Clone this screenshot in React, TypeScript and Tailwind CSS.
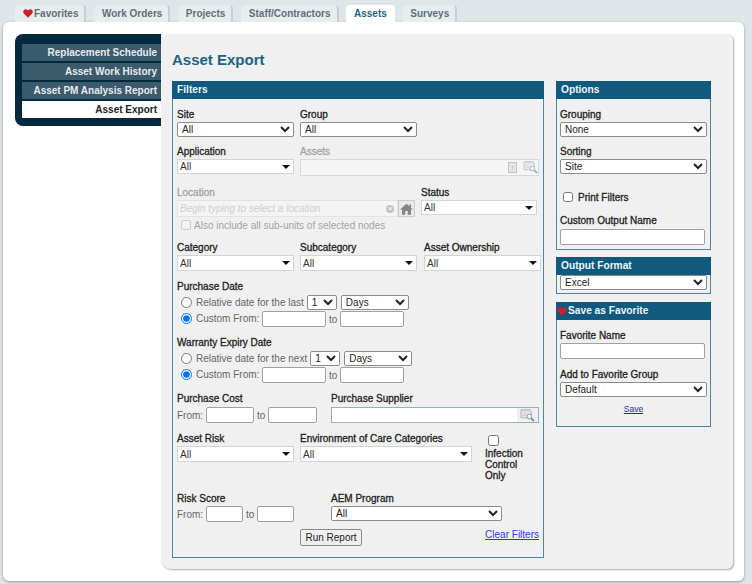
import type { ReactNode } from 'react';

const TABS = ['Work Orders', 'Projects', 'Staff/Contractors', 'Assets', 'Surveys'];
const SIDE_ITEMS = ['Replacement Schedule', 'Asset Work History', 'Asset PM Analysis Report'];

function Heart({ className }: { className: string }) {
  return (
    <svg viewBox="0 0 24 22" className={className}>
      <path
        d="M12 21.500 2.200 11.600C-.6 8.700-.3 4.300 2.500 2 5.200-.2 9.300.2 12 3.600 14.700.2 18.800-.2 21.500 2c2.800 2.300 3.100 6.700.3 9.600z"
        fill="#c8232c"
      />
    </svg>
  );
}

function FindIcon() {
  return (
    <svg viewBox="0 0 16 14" className="h-[13px] w-[15px]">
      <path d="M1 .5h9l2 2v7H1z" fill="#e6e9eb" stroke="#a9b0b5" />
      <path d="M1 .5h11v2H1z" fill="#c8ced2" />
      <path d="M3 5h4M3 7h4" stroke="#c3c8cc" />
      <circle cx="10" cy="8" r="2.500" fill="#f6f7f8" stroke="#8b9298" />
      <path d="m12 10 3 3" stroke="#6d7479" strokeWidth="1.600" />
    </svg>
  );
}

function Label({ children, className = '' }: { children: ReactNode; className?: string }) {
  return <div className={`text-[10px] leading-[13px] text-[#222] [-webkit-text-stroke:0.3px_#222] ${className}`}>{children}</div>;
}

function MutedLabel({ children }: { children: ReactNode }) {
  return <div className="mb-[1px] text-[10px] leading-[13px] text-[#a4a4a4] [-webkit-text-stroke:0.3px_#a4a4a4]">{children}</div>;
}

function Select({ value, className }: { value: string; className: string }) {
  return (
    <select
      defaultValue={value}
      className={`block h-[15px] rounded-[2px] border border-[#8c8c8c] bg-white text-[10px] leading-[13px] text-[#222] ${className}`}
    >
      <option>{value}</option>
    </select>
  );
}

function TriSelect({ className }: { className: string }) {
  return (
    <div
      className={`flex items-center justify-between border border-[#d4d4d4] bg-white pr-[3px] pl-[2px] text-[10px] leading-[13px] text-[#333] ${className}`}
    >
      <span>All</span>
      <span className="h-0 w-0 border-x-[4px] border-t-[4px] border-x-transparent border-t-[#111]" />
    </div>
  );
}

function TextBox({ className }: { className: string }) {
  return <input type="text" className={`block h-[16px] rounded-[2px] border border-[#a0a0a0] bg-white ${className}`} />;
}

function DateRange({ name, relative }: { name: string; relative: string }) {
  return (
    <div className="mt-[2px] pl-[4px] text-[10px] leading-[13px] whitespace-nowrap text-[#666]">
      <div className="flex h-[15px] items-center">
        <input type="radio" name={name} className="m-0 h-[11px] w-[11px]" />
        <span className="ml-[4px]">{relative}</span>
        <Select value="1" className="ml-[3px] w-[30px]" />
        <Select value="Days" className="ml-[4px] w-[68px]" />
      </div>
      <div className="mt-[1px] flex h-[16px] items-center">
        <input type="radio" name={name} defaultChecked className="m-0 mb-[2px] h-[11px] w-[11px]" />
        <span className="mb-[2px] ml-[4px] w-[63px]">Custom From:</span>
        <TextBox className="ml-[3px] w-[64px]" />
        <span className="mx-[3px] w-[8px]">to</span>
        <TextBox className="w-[64px]" />
      </div>
    </div>
  );
}

function Panel({ title, icon, children, className }: { title: string; icon?: ReactNode; children: ReactNode; className: string }) {
  return (
    <div className={`border border-[#4a87a3] ${className}`}>
      <div className="-mx-px -mt-px flex h-[18px] items-center bg-[#105a7e] pl-[5px] text-[10.2px] font-bold text-[#eef4f7]">
        {icon}
        {title}
      </div>
      {children}
    </div>
  );
}

function FiltersPanel() {
  return (
    <Panel title="Filters" className="h-[477px] w-[372px]">
      <div className="px-[4px] pt-[9px]">
        <div className="flex gap-[6px]">
          <div>
            <Label>Site</Label>
            <Select value="All" className="mt-[1px] w-[117px]" />
          </div>
          <div>
            <Label>Group</Label>
            <Select value="All" className="mt-[1px] w-[117px]" />
          </div>
        </div>

        <div className="mt-[8px] flex gap-[6px]">
          <div>
            <Label className="mb-[1px]">Application</Label>
            <TriSelect className="h-[15px] w-[117px]" />
          </div>
          <div>
            <MutedLabel>Assets</MutedLabel>
            <div className="flex h-[17px] w-[239px] items-center border border-[#cfdce6] bg-[#f5f5f5]">
              <div className="flex-1" />
              <span className="flex h-[11px] w-[9px] items-center justify-center border border-[#c4c4c4] bg-[#e4e4e4] text-[7px] leading-none text-[#999]">↑</span>
              <span className="ml-[6px] opacity-70">
                <FindIcon />
              </span>
            </div>
          </div>
        </div>

        <div className="mt-[10px] flex">
          <div>
            <MutedLabel>Location</MutedLabel>
            <div className="flex h-[17px] w-[238px]">
              <div className="flex w-[221px] items-center justify-between border border-[#e3e3e3] bg-[#f4f4f4] pr-[3px] pl-[2px] text-[10px] text-[#cfcfcf] italic">
                <span>Begin typing to select a location</span>
                <span className="flex h-[8px] w-[8px] items-center justify-center rounded-full bg-[#c4c4c4] text-[8px] leading-none text-white">×</span>
              </div>
              <div className="flex w-[17px] items-center justify-center border border-[#ccc] bg-[#e9e9e9]">
                <svg viewBox="0 0 16 14" className="h-[12px] w-[13px]">
                  <path d="M8 .5 0 7.500h2.500V14h4V9.500h3V14h4V7.500H16L13.500 5.300V1.500h-2v2z" fill="#85867c" />
                </svg>
              </div>
            </div>
          </div>
          <div className="ml-[6px]">
            <Label className="mb-[1px]">Status</Label>
            <TriSelect className="h-[15px] w-[116px]" />
          </div>
        </div>

        <label className="flex h-[16px] items-center pl-[4px] text-[10px] text-[#a4a4a4]">
          <input type="checkbox" disabled className="m-0 h-[10px] w-[10px]" />
          <span className="ml-[3px]">Also include all sub-units of selected nodes</span>
        </label>

        <div className="mt-[8px] flex">
          <div>
            <Label className="mb-[1px]">Category</Label>
            <TriSelect className="h-[16px] w-[117px]" />
          </div>
          <div className="ml-[6px]">
            <Label className="mb-[1px]">Subcategory</Label>
            <TriSelect className="h-[16px] w-[117px]" />
          </div>
          <div className="ml-[7px]">
            <Label className="mb-[1px]">Asset Ownership</Label>
            <TriSelect className="h-[16px] w-[117px]" />
          </div>
        </div>

        <Label className="mt-[9px]">Purchase Date</Label>
        <DateRange name="purchase" relative="Relative date for the last" />

        <Label className="mt-[9px]">Warranty Expiry Date</Label>
        <DateRange name="warranty" relative="Relative date for the next" />

        <div className="mt-[9px] flex">
          <div className="w-[154px]">
            <Label className="mb-[2px]">Purchase Cost</Label>
            <div className="flex h-[16px] items-center text-[10px] text-[#666]">
              <span className="w-[26px]">From:</span>
              <TextBox className="ml-[3px] w-[48px]" />
              <span className="mx-[3px] w-[8px]">to</span>
              <TextBox className="w-[49px]" />
            </div>
          </div>
          <div>
            <Label className="mb-[2px]">Purchase Supplier</Label>
            <div className="flex h-[16px] w-[208px] items-center justify-end border border-[#8fb2c9] bg-white">
              <div className="flex h-full w-[21px] items-center justify-center bg-[#f0f0f0]">
                <FindIcon />
              </div>
            </div>
          </div>
        </div>

        <div className="mt-[9px] flex">
          <div>
            <Label className="mb-[1px]">Asset Risk</Label>
            <TriSelect className="h-[16px] w-[117px]" />
          </div>
          <div className="ml-[6px]">
            <Label className="mb-[1px]">Environment of Care Categories</Label>
            <TriSelect className="h-[16px] w-[172px]" />
          </div>
          <div className="ml-[13px] w-[50px] pt-[3px]">
            <input type="checkbox" className="m-0 ml-[3px] block h-[11px] w-[11px]" />
            <Label className="mt-[2px] !leading-[11px]">Infection Control Only</Label>
          </div>
        </div>

        <div className="mt-[11px] flex">
          <div className="w-[154px]">
            <Label className="mb-[1px]">Risk Score</Label>
            <div className="flex h-[16px] items-center text-[10px] text-[#666]">
              <span className="w-[26px]">From:</span>
              <TextBox className="ml-[3px] w-[37px]" />
              <span className="mx-[3px] w-[8px]">to</span>
              <TextBox className="w-[37px]" />
            </div>
          </div>
          <div>
            <Label className="mb-[1px]">AEM Program</Label>
            <Select value="All" className="w-[171px]" />
          </div>
        </div>

        <div className="mt-[7px] flex items-start">
          <button className="ml-[123px] h-[17px] w-[62px] rounded-[2px] border border-[#8c8c8c] bg-[#efefef] text-[10px] leading-none text-[#222]">
            Run Report
          </button>
          <a className="ml-auto text-[10px] leading-[12px] text-[#3333ee] underline">Clear Filters</a>
        </div>
      </div>
    </Panel>
  );
}

function SidePanels() {
  return (
    <div className="ml-[12px] w-[155px]">
      <Panel title="Options" className="h-[169px]">
        <div className="px-[3px] pt-[9px]">
          <Label className="mb-[1px]">Grouping</Label>
          <Select value="None" className="w-[147px]" />
          <Label className="mt-[8px] mb-[1px]">Sorting</Label>
          <Select value="Site" className="w-[147px]" />
          <label className="mt-[17px] flex h-[12px] items-center pl-[3px]">
            <input type="checkbox" className="m-0 h-[10px] w-[10px]" />
            <Label className="ml-[5px]">Print Filters</Label>
          </label>
          <Label className="mt-[11px] mb-[2px]">Custom Output Name</Label>
          <TextBox className="w-[145px]" />
        </div>
      </Panel>
      <Panel title="Output Format" className="mt-[7px] h-[37px]">
        <div className="px-[3px]">
          <Select value="Excel" className="w-[147px]" />
        </div>
      </Panel>
      <Panel
        title="Save as Favorite"
        icon={<Heart className="mr-[1px] -ml-[4px] h-[9px] w-[10px]" />}
        className="mt-[8px] h-[125px]"
      >
        <div className="px-[3px] pt-[9px]">
          <Label className="mb-[1px]">Favorite Name</Label>
          <TextBox className="w-[145px]" />
          <Label className="mt-[9px] mb-[1px]">Add to Favorite Group</Label>
          <Select value="Default" className="w-[147px]" />
          <div className="mt-[7px] text-center text-[8.5px] leading-[11px] text-[#2222dd] underline">Save</div>
        </div>
      </Panel>
    </div>
  );
}

export default function App() {
  return (
    <div className="h-[584px] w-[752px] overflow-hidden bg-[#dfe6ea] pt-[5px] pl-[3px] font-['Liberation_Sans',Arial,sans-serif]">
      <div className="flex h-[17px] items-end pl-[12px] text-[10px] font-bold text-[#5f6f78]">
        <div className="mr-[7.5px] flex h-[17px] items-center rounded-t-[4px] border-r-2 border-[#c6ced3] bg-[#e7ecef] pr-[6px] pl-[8px]">
          <Heart className="mr-[1px] h-[9px] w-[10px]" />
          Favorites
        </div>
        {TABS.map((tab) =>
          tab === 'Assets' ? (
            <div key={tab} className="mr-[7.5px] flex h-[17px] items-center rounded-t-[4px] bg-white px-[8px] text-[#1b6383]">
              {tab}
            </div>
          ) : (
            <div key={tab} className="mr-[7.5px] flex h-[17px] items-center rounded-t-[4px] border-r-2 border-[#c6ced3] bg-[#e7ecef] pr-[6px] pl-[8px]">
              {tab}
            </div>
          ),
        )}
      </div>

      <div className="flex h-[559px] w-[741px] rounded-[6px] bg-white pt-[12px] pl-[12px] shadow-[0_1px_3px_rgba(0,0,0,0.35)]">
        <div className="h-[92px] w-[146px] rounded-l-[8px] bg-[#03293f] pt-[10px] pl-[7px]">
          {SIDE_ITEMS.map((item) => (
            <div
              key={item}
              className="mb-[2px] flex h-[17px] items-center justify-end bg-[#3b5a6b] pr-[4px] text-[10px] font-bold whitespace-nowrap text-[#e6ebee]"
            >
              {item}
            </div>
          ))}
          <div className="flex h-[17px] items-center justify-end bg-white pr-[4px] text-[10px] font-bold text-[#222]">
            Asset Export
          </div>
        </div>
        <div className="h-[535px] w-[572px] rounded-r-[6px] rounded-bl-[10px] bg-[#f0f0f0] pt-[16px] pl-[11px] shadow-[1px_1px_2px_rgba(0,0,0,0.35)]">
          <h1 className="text-[15px] leading-[19px] font-bold text-[#1b6383]">Asset Export</h1>
          <div className="mt-[12px] flex">
            <FiltersPanel />
            <SidePanels />
          </div>
        </div>
      </div>
    </div>
  );
}
